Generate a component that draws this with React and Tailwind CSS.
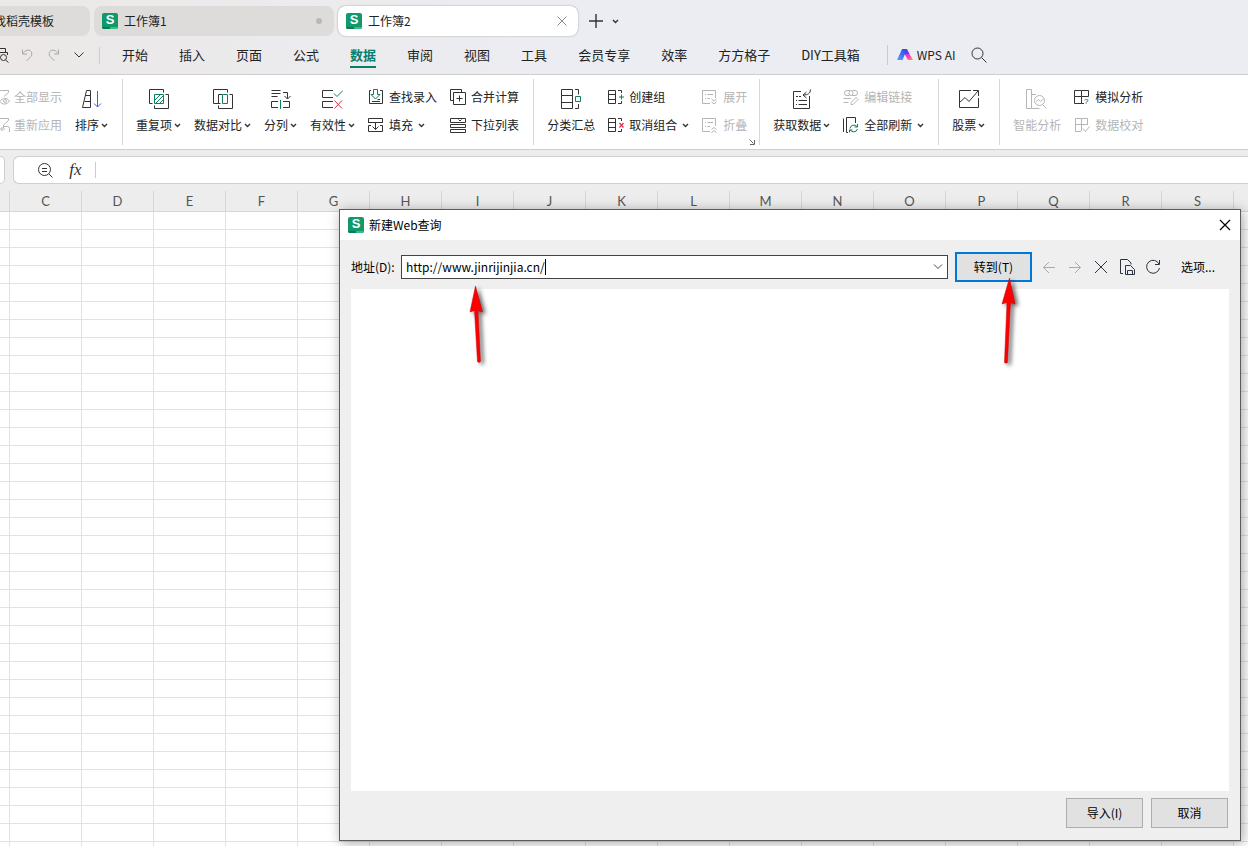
import React, { useState } from "react";

const INK = "#333333";
const GREEN = "#0f8058";
const RED = "#d6304f";
const MUTED = "#b5b5b5";

const Svg = ({ w, h, box, color = INK, children }) => (
  <svg
    width={w}
    height={h}
    viewBox={box || `0 0 ${w} ${h}`}
    fill="none"
    stroke={color}
    className="shrink-0"
    aria-hidden="true"
  >
    {children}
  </svg>
);

const Caret = () => (
  <Svg w={7} h={5}>
    <path d="M1 1l2.5 2.5L6 1" strokeWidth="1.4" />
  </Svg>
);

const AppIcon = () => (
  <span className="flex h-4 w-4 shrink-0 flex-col overflow-hidden rounded-[2px] bg-[#12996a]">
    <span className="flex h-[14px] items-center justify-center font-['Liberation_Sans',sans-serif] text-[13px] leading-[14px] font-bold text-white">
      S
    </span>
    <span className="flex h-[2px]">
      <span className="w-1/2 bg-[#0a7a52]" />
      <span className="w-1/2 bg-[#3db98a]" />
    </span>
  </span>
);

const icons = {
  showAll: (
    <Svg w={10} h={16} box="6 0 10 16" color={MUTED}>
      <path d="M2 1.5h12.500v2L10 7.500M6 12.500c2-4 7-4 9.500-.5-2.500 4-7.500 4-9.500.5z" />
      <circle cx="11" cy="12" r="1.5" />
    </Svg>
  ),
  reapply: (
    <Svg w={10} h={16} box="6 0 10 16" color={MUTED}>
      <path d="M2 1.500h12.500v2L9.500 8v3M8.500 10l-2 2 2 2M7 12h4M10 9.500h3.500a2 2 0 0 1 2 2V15" />
    </Svg>
  ),
  sort: (
    <Svg w={21} h={20} box="-1 0 21 20">
      <path d="M4.500 1.500h4v17H.500zM3.500 6.500h5M2.500 12.500h6" />
      <path d="M15.500 2v16M12 14.500l3.500 3.500 3.500-3.500" stroke="#3563dd" />
    </Svg>
  ),
  duplicate: (
    <Svg w={21} h={20} box="-1 0 21 20">
      <path d="M3.500 14.500h-3V.5h14v3M16.500 5.500h3v14h-14v-3" />
      <path d="M5.500 5.500h9v9h-9zM6 11l5-5M7 14l7-7M11 14l3-3" stroke={GREEN} />
    </Svg>
  ),
  compare: (
    <Svg w={21} h={20} box="-1 0 21 20">
      <path d="M7.500 14.500h-7V.5h14v3M16.500 5.500h3v14h-14v-3M9 5.500H5.500v9" />
      <path d="M9.500 5.500h5v9h-5z" stroke={GREEN} />
    </Svg>
  ),
  split: (
    <Svg w={21} h={20} box="-1 0 21 20">
      <path d="M.500 1.500h9M.500 4.500h9M.500 7.500h6M12 3.500h4.500v6M13.500 7l3 3 3-3M7 12.500H.500v6H7M12 12.500h6.500v6H12" />
      <path d="M9.500 11v9" stroke={GREEN} />
    </Svg>
  ),
  validity: (
    <Svg w={21} h={20}>
      <path d="M11 1.500H.500v7H11M11 12.500H.500v6H11" />
      <path d="M12 4.500l3 3L21 1.500" stroke={GREEN} />
      <path d="M12.500 11.500l7.500 8M20 11.500l-7.500 8" stroke={RED} />
    </Svg>
  ),
  lookup: (
    <Svg w={16} h={16}>
      <path d="M3 1.500H1.500v13h13v-13H12M9.500 10.500H12M4 12.500h8" />
      <path d="M5.500.5h4v5H12L7.500 10 3 5.500h2.500z" stroke={GREEN} />
    </Svg>
  ),
  fill: (
    <Svg w={16} h={16}>
      <path d="M.500 6V1.500h14V6M.500 5.500h14M3 8.500H.500v6h14v-6H12M7.500 5.500v7M4.500 9.500l3 3 3-3" />
    </Svg>
  ),
  consolidate: (
    <Svg w={16} h={16}>
      <path d="M3 11.500H.500V.5h11V3M3.500 3.500h12v12h-12zM9.500 6.500v6M6.500 9.500h6" />
    </Svg>
  ),
  dropdown: (
    <Svg w={16} h={16}>
      <path d="M.500 1.500h15v4H.500zM.500 7.500h15v3H.500zM.500 12.500h15v3H.500zM8.500 2.500L10 4l1.500-1.500" />
    </Svg>
  ),
  subtotal: (
    <Svg w={20} h={20}>
      <path d="M.500.5h11v19H.500zM.500 6.500h11M.500 13.500h11M14 .5h3.500v5M17.500 15v4.500H14" />
      <path d="M14.500 7.500h5v5h-5z" stroke={GREEN} />
    </Svg>
  ),
  group: (
    <Svg w={16} h={16}>
      <path d="M.500 1.500h7v13h-7zM.500 5.500h7M.500 10.500h7M10 1.500h3.500V4M13.500 12v2.500H10" />
      <path d="M13.500 5.500v5M11 8h5" stroke={GREEN} />
    </Svg>
  ),
  ungroup: (
    <Svg w={16} h={16}>
      <path d="M.500 1.500h7v13h-7zM.500 5.500h7M.500 10.500h7M10 1.500h3.500V4M13.500 12v2.500H10" />
      <path d="M11.500 6l4 4.500M15.500 6l-4 4.500" stroke={RED} strokeWidth="1.2" />
    </Svg>
  ),
  expand: (
    <Svg w={16} h={16} color={MUTED}>
      <path d="M8 14.500H.500v-13h13V9M3 5.500h1M5.500 5.500H11M3 9.500h1M5.500 9.500H8M9.500 10l2.500 2 2.500-2M9.500 13l2.500 2 2.500-2" />
    </Svg>
  ),
  collapse: (
    <Svg w={16} h={16} color={MUTED}>
      <path d="M8 14.500H.500v-13h13V9M3 5.500h1M5.500 5.500H11M3 9.500h1M5.500 9.500H8M9.500 12.500l2.500-2 2.500 2M9.500 15.500l2.500-2 2.500 2" />
    </Svg>
  ),
  fetchData: (
    <Svg w={21} h={20} box="-1 0 21 20">
      <path d="M9 2.500H1.500v17h16V7M4 7.500h2M7 7.500h2M4 11.500h1M6.500 11.500H15M4 15.500h1M6.500 15.500H15" />
      <path d="M18.500.5c0 4-3 5.500-7 5.500M14.500 3L11 6l3.500 3" />
    </Svg>
  ),
  editLink: (
    <Svg w={16} h={16} color={MUTED}>
      <path d="M6.500 6.500H4a2.500 2.500 0 0 1 0-5h3.500A2.500 2.500 0 0 1 9 6M9.500 1.500H12a2.500 2.500 0 0 1 0 5H8.500A2.500 2.500 0 0 1 7 2M.500 9.500H8M.500 13.500h5M8 15.500v-2L13 8.500l2 2-5 5z" />
    </Svg>
  ),
  refreshAll: (
    <Svg w={16} h={16}>
      <path d="M.500 15V1.500M5 15.500H3.500V.5h9V6" />
      <path d="M14 9.500a4 4 0 0 0-7 2M7 12.500a4 4 0 0 0 7.500-.5M14.500 7v3h-3M6.500 15.500V13h3" stroke={GREEN} />
    </Svg>
  ),
  stock: (
    <Svg w={21} h={20} box="-1 0 21 20">
      <path d="M12 1.500H.500v17h19V9M.500 13.500L6 8.500l4 4 9-10.500M14 1.500h5.500V7" />
    </Svg>
  ),
  smart: (
    <Svg w={22} h={20} color={MUTED}>
      <path d="M.500.5h5v19h-5zM5.500 5.500H10M5.500 19.500h8M17 16l3.500 3.500M10 12.500l2.500-2 2 2 3-2.500" />
      <circle cx="13.500" cy="11.500" r="5" />
    </Svg>
  ),
  whatIf: (
    <Svg w={16} h={16}>
      <path d="M.500 1.500h7v6h-7zM7.500 1.500h7v6h-7M.500 7.500v7h7v-7M7.500 14.500H10" />
      <text x="10" y="15" fontSize="8" fill={INK} stroke="none" fontFamily="Liberation Sans">
        ?
      </text>
    </Svg>
  ),
  proof: (
    <Svg w={16} h={16} color={MUTED}>
      <path d="M7 14.500H1.500v-13h12V8M1.500 7.500h12M7.500 1.500V14M9 11.500l2.500 3 4-5" />
    </Svg>
  ),
};

// columns: one entry = tall button, two entries = stacked small buttons
const ribbon = [
  {
    columns: [
      [
        { label: "全部显示", icon: "showAll", off: true },
        { label: "重新应用", icon: "reapply", off: true },
      ],
      [{ label: "排序", icon: "sort", menu: true }],
    ],
    flush: true,
  },
  {
    columns: [
      [{ label: "重复项", icon: "duplicate", menu: true }],
      [{ label: "数据对比", icon: "compare", menu: true }],
      [{ label: "分列", icon: "split", menu: true }],
      [{ label: "有效性", icon: "validity", menu: true }],
      [
        { label: "查找录入", icon: "lookup" },
        { label: "填充", icon: "fill", menu: true },
      ],
      [
        { label: "合并计算", icon: "consolidate" },
        { label: "下拉列表", icon: "dropdown" },
      ],
    ],
  },
  {
    columns: [
      [{ label: "分类汇总", icon: "subtotal" }],
      [
        { label: "创建组", icon: "group" },
        { label: "取消组合", icon: "ungroup", menu: true },
      ],
      [
        { label: "展开", icon: "expand", off: true },
        { label: "折叠", icon: "collapse", off: true },
      ],
    ],
    launcher: true,
  },
  {
    columns: [
      [{ label: "获取数据", icon: "fetchData", menu: true }],
      [
        { label: "编辑链接", icon: "editLink", off: true },
        { label: "全部刷新", icon: "refreshAll", menu: true },
      ],
    ],
  },
  { columns: [[{ label: "股票", icon: "stock", menu: true }]] },
  {
    columns: [
      [{ label: "智能分析", icon: "smart", off: true }],
      [
        { label: "模拟分析", icon: "whatIf" },
        { label: "数据校对", icon: "proof", off: true },
      ],
    ],
    last: true,
  },
];

const menus = [
  "开始", "插入", "页面", "公式", "数据", "审阅", "视图",
  "工具", "会员专享", "效率", "方方格子", "DIY工具箱",
];

const columnNames = "CDEFGHIJKLMNOPQRS".split("");
const rowCount = 36;

const TallButton = ({ item }) => (
  <button
    disabled={item.off}
    className={`flex shrink-0 flex-col items-center whitespace-nowrap ${
      item.off ? "text-[#b5b5b5]" : "text-[#222222]"
    }`}
  >
    <span className="flex h-7 items-center pt-1">{icons[item.icon]}</span>
    <span className="flex h-7 items-center gap-[2px]">
      {item.label}
      {item.menu && <Caret />}
    </span>
  </button>
);

const SmallButton = ({ item }) => (
  <button
    disabled={item.off}
    className={`flex h-7 items-center whitespace-nowrap ${
      item.icon === "showAll" || item.icon === "reapply" ? "gap-1" : "gap-[5px]"
    } ${item.off ? "text-[#b5b5b5]" : "text-[#222222]"}`}
  >
    {icons[item.icon]}
    {item.label}
    {item.menu && <Caret />}
  </button>
);

const TitleTabs = () => (
  <div className="flex items-center pt-[6px] text-xs text-[#222222]">
    <button className="flex h-[30px] w-[90px] items-center justify-end overflow-hidden rounded-r-lg bg-[#dedcdb] pr-9 whitespace-nowrap">
      找稻壳模板
    </button>
    <button className="ml-1 flex h-[30px] w-60 items-center gap-[6px] rounded-lg bg-[#dedcdb] px-2">
      <AppIcon />
      工作簿1
      <span className="mr-1 ml-auto h-[6px] w-[6px] rounded-full bg-[#b9b8b7]" />
    </button>
    <div className="ml-1 flex h-[30px] w-60 items-center gap-[6px] rounded-lg bg-white px-2 shadow-[0_0_2px_rgba(0,0,0,0.35)]">
      <AppIcon />
      工作簿2
      <button aria-label="关闭标签" className="mr-[3px] ml-auto">
        <Svg w={10} h={10} color="#8a8a8a">
          <path d="M.5.5l9 9M9.500.5l-9 9" />
        </Svg>
      </button>
    </div>
    <button aria-label="新建" className="ml-[11px]">
      <Svg w={14} h={14}>
        <path d="M7 0v14M0 7h14" strokeWidth="1.4" />
      </Svg>
    </button>
    <button aria-label="标签列表" className="ml-[9px]">
      <Caret />
    </button>
  </div>
);

const MenuBar = () => {
  const [current, setCurrent] = useState("数据");

  return (
    <nav className="flex h-[39px] items-center border-b border-[#cdcdd0] text-[13px] whitespace-nowrap text-[#222222]">
      <button aria-label="打印预览">
        <Svg w={9} h={16}>
          <path d="M0 1.500h5.500V5M0 5.500h7.500V8M8.500 15.500L5.500 13" />
          <circle cx="3.500" cy="10.500" r="3" />
        </Svg>
      </button>
      <button aria-label="撤销" className="ml-[13px]">
        <Svg w={11} h={12} color="#a9a7a6">
          <path d="M.500.5v4.500H5M.500 5C3 1 7 0 9 2.500 11.500 6 8 9 4.500 11.500" />
        </Svg>
      </button>
      <button aria-label="恢复" className="ml-[15px]">
        <Svg w={11} h={12} color="#a9a7a6">
          <path d="M10.500.5v4.500H6M10.500 5C8 1 4 0 2 2.500-.500 6 3 9 6.500 11.500" />
        </Svg>
      </button>
      <button aria-label="更多" className="ml-[15px]">
        <Svg w={10} h={6}>
          <path d="M.5.5L5 5 9.500.5" />
        </Svg>
      </button>
      <span className="mr-[22px] ml-[15px] h-[17px] w-px bg-[#cfcdcd]" />
      <div className="flex gap-[31px]">
        {menus.map((name) => (
          <button
            key={name}
            onClick={() => setCurrent(name)}
            className={`flex h-[26px] items-center border-b-2 pt-[2px] ${
              current === name
                ? "border-[#0b7d6b] font-bold text-[#0b7d6b]"
                : "border-transparent"
            }`}
          >
            {name}
          </button>
        ))}
      </div>
      <span className="mr-[9px] ml-[27px] h-5 w-px bg-[#c9cacf]" />
      <button className="flex items-center gap-1 text-xs">
        <svg width="16" height="12" viewBox="0 0 16 12" aria-hidden="true">
          <defs>
            <linearGradient id="aiBlue" x1="1" y1="0" x2="0" y2="1">
              <stop offset="0" stopColor="#2440e8" />
              <stop offset="1" stopColor="#5aa2ff" />
            </linearGradient>
            <linearGradient id="aiPink" x1="0" y1="0" x2="1" y2="1">
              <stop offset="0" stopColor="#b03cf5" />
              <stop offset="0.5" stopColor="#ff3fae" />
              <stop offset="1" stopColor="#ff9a6b" />
            </linearGradient>
          </defs>
          <path d="M5 0h5L5.500 11H0z" fill="url(#aiBlue)" />
          <path d="M7.500 5h5L16 11h-5z" fill="url(#aiPink)" />
          <path d="M9 0h1l2.500 5h-5z" fill="#5a3df0" />
        </svg>
        WPS AI
      </button>
      <button aria-label="搜索" className="ml-4">
        <Svg w={16} h={16}>
          <circle cx="6.500" cy="6.500" r="5.500" />
          <path d="M10.500 10.500l5 5" />
        </Svg>
      </button>
    </nav>
  );
};

const Ribbon = () => (
  <div className="flex border-b border-[#cdcdcd] bg-white py-1 text-xs">
    {ribbon.map((group, i) => (
      <div
        key={i}
        className={`relative flex h-[66px] gap-[13px] py-1 ${
          group.flush ? "pl-0" : "pl-[13px]"
        } ${group.launcher ? "pr-3" : "pr-[14px]"} ${
          group.last ? "" : "border-r border-[#d9d9d9]"
        }`}
      >
        {group.columns.map((column) =>
          column.length === 1 ? (
            <TallButton key={column[0].label} item={column[0]} />
          ) : (
            <div key={column[0].label} className="flex flex-col">
              {column.map((item) => (
                <SmallButton key={item.label} item={item} />
              ))}
            </div>
          )
        )}
        {group.launcher && (
          <button aria-label="分级显示设置" className="absolute right-1 bottom-0">
            <Svg w={6} h={6} color="#666666">
              <path d="M.5.5l4 4M5.500 1v4.500H1" />
            </Svg>
          </button>
        )}
      </div>
    ))}
  </div>
);

const FormulaBar = () => (
  <div className="flex pt-[6px] pb-[7px]">
    <div className="h-7 w-[5px] rounded-r-md border border-l-0 border-[#cfcfcf] bg-white" />
    <div className="ml-2 flex h-7 flex-1 items-center rounded-l-md border border-r-0 border-[#cfcfcf] bg-white pl-6">
      <button aria-label="浏览公式结果">
        <Svg w={15} h={15}>
          <circle cx="6.500" cy="6.500" r="6" />
          <path d="M4 5.500h5M4 8.500h5M11 11l3.500 3.500" />
        </Svg>
      </button>
      <button
        aria-label="插入函数"
        className="ml-[15px] w-[15px] font-['Liberation_Serif',serif] text-[17px] leading-5 text-[#333333] italic"
      >
        fx
      </button>
      <span className="ml-3 h-4 w-px bg-[#cccccc]" />
      <input aria-label="编辑栏" className="h-5 min-w-0 flex-1 px-2 text-xs outline-none" />
    </div>
  </div>
);

const Sheet = () => (
  <div className="min-h-0 flex-1 overflow-hidden bg-white">
    <table className="w-[1306px] table-fixed border-separate border-spacing-0">
      <thead>
        <tr className="h-[21px] bg-[#ededed] font-['Lato',sans-serif] text-[13px] leading-5 text-[#555555]">
          <th className="w-[10px] border-r border-b border-[#d6d6d6] p-0" />
          {columnNames.map((name) => (
            <th key={name} className="w-[72px] border-r border-b border-[#d6d6d6] p-0 font-normal">
              {name}
            </th>
          ))}
          <th className="w-[72px] border-r border-b border-[#d6d6d6] p-0" />
        </tr>
      </thead>
      <tbody>
        {Array.from({ length: rowCount }, (_, r) => (
          <tr key={r} className="h-[18px]">
            {Array.from({ length: columnNames.length + 2 }, (_, c) => (
              <td key={c} className="border-r border-b border-[#e2e2e2] p-0" />
            ))}
          </tr>
        ))}
      </tbody>
    </table>
  </div>
);

const WebQueryDialog = () => {
  const [url, setUrl] = useState("http://www.jinrijinjia.cn/");

  return (
    <div
      role="dialog"
      aria-labelledby="dialog-title"
      className="absolute top-[209px] left-[339px] w-[902px] border border-[#5c5c5c] bg-[#efefef] text-xs text-black shadow-[2px_2px_12px_rgba(0,0,0,0.35)]"
    >
      <div className="flex h-[30px] items-center gap-[5px] bg-white pr-[9px] pl-2">
        <AppIcon />
        <h2 id="dialog-title">新建Web查询</h2>
        <button aria-label="关闭" className="ml-auto">
          <Svg w={12} h={12} color="#000000">
            <path d="M1 1l10 10M11 1L1 11" strokeWidth="1.2" />
          </Svg>
        </button>
      </div>

      <div className="flex h-[49px] items-center px-[11px] pt-1 whitespace-nowrap">
        <label htmlFor="address" className="w-[50px]">
          地址(D):
        </label>
        <div className="flex h-6 flex-1 items-center border border-[#444444] bg-white pr-1 pl-1">
          <input
            id="address"
            value={url}
            onChange={(e) => setUrl(e.target.value)}
            className="field-sizing-content outline-none"
          />
          <span className="h-4 w-px bg-black" />
          <button aria-label="历史地址" className="ml-auto">
            <Svg w={10} h={6} color="#444444">
              <path d="M1 .5l4 4 4-4" />
            </Svg>
          </button>
        </div>
        <button className="ml-[7px] h-[30px] w-[77px] border-2 border-[#0078d7] bg-[#e1e1e1]">
          转到(T)
        </button>
        <div className="ml-[9px] flex items-center gap-[10px]">
          <button aria-label="后退" disabled>
            <Svg w={16} h={16} color="#a9a9a9">
              <path d="M14 8.500H2.500M8 3L2.500 8.500 8 14" />
            </Svg>
          </button>
          <button aria-label="前进" disabled>
            <Svg w={16} h={16} color="#a9a9a9">
              <path d="M2 8.500h11.500M8 3l5.500 5.500L8 14" />
            </Svg>
          </button>
          <button aria-label="停止">
            <Svg w={16} h={16} color="#2b3440">
              <path d="M2 2l12 12M14 2L2 14" />
            </Svg>
          </button>
          <button aria-label="保存">
            <Svg w={16} h={16} color="#2b3440">
              <path d="M4 14.500H1.500V.5h7l3.500 3.500v1.500M6.500 6.500h5l4 4v5h-9zM8.500 15.500v-4h5v4" />
            </Svg>
          </button>
          <button aria-label="刷新">
            <Svg w={16} h={16} color="#2b3440">
              <path d="M14 5A6.500 6.500 0 1 0 14.500 9M14.500 1v4.500H10" />
            </Svg>
          </button>
        </div>
        <button className="mr-[14px] ml-5">选项...</button>
      </div>

      <div className="mx-[11px] h-[502px] bg-white" />

      <div className="flex h-[49px] justify-end gap-2 pt-[7px] pr-3">
        <button className="h-[30px] w-[77px] border border-[#adadad] bg-[#e1e1e1]">
          导入(I)
        </button>
        <button className="h-[30px] w-[77px] border border-[#adadad] bg-[#e1e1e1]">
          取消
        </button>
      </div>
    </div>
  );
};

const Pointer = ({ className, shape }) => (
  <svg
    width="24"
    height="90"
    viewBox="0 0 24 90"
    className={`pointer-events-none absolute drop-shadow-[3px_2px_2px_rgba(0,0,0,0.6)] ${className}`}
    aria-hidden="true"
  >
    <path d={shape} fill="#fe0000" stroke="#c80000" strokeWidth="0.5" />
  </svg>
);

export default function App() {
  return (
    <div className="relative flex h-screen flex-col overflow-hidden bg-linear-to-r from-[#ebe8e7] to-[#ecedf2] to-45% font-['Noto_Sans_CJK_SC',sans-serif]">
      <header>
        <TitleTabs />
        <MenuBar />
        <Ribbon />
      </header>
      <div className="flex min-h-0 flex-1 flex-col bg-[#ededed]">
        <FormulaBar />
        <Sheet />
      </div>

      <WebQueryDialog />
      <Pointer
        className="top-[284px] left-[464px]"
        shape="M11.500 2L18.500 28l-4.500-1.500 2.500 51q-1.500 2-3 0L10.500 26.500 6 28z"
      />
      <Pointer
        className="top-[276px] left-[996px]"
        shape="M13.500 2L19 28l-4.500-1.500-3 60q-1.500 1.500-3 0l2.500-60L6 28z"
      />
    </div>
  );
}
